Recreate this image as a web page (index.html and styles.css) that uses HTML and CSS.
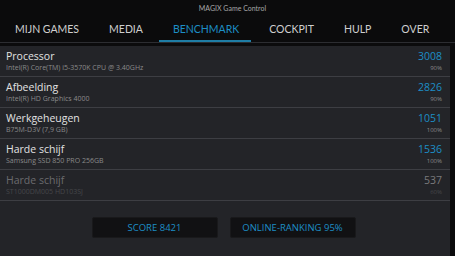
FILE: index.html
```html
<!DOCTYPE html>
<html lang="nl">
<head>
  <meta charset="UTF-8">
  <title>MAGIX Game Control</title>
  <link rel="stylesheet" href="styles.css">
</head>
<body>
  <!-- kop met titel en tabs -->
  <header class="header">
    <div class="appTitle">MAGIX Game Control</div>
    <nav class="tabs">
      <span class="tab">MIJN GAMES</span>
      <span class="tab">MEDIA</span>
      <span class="tab active">BENCHMARK</span>
      <span class="tab">COCKPIT</span>
      <span class="tab">HULP</span>
      <span class="tab">OVER</span>
    </nav>
  </header>

  <!-- benchmark lijst -->
  <main class="panel">
    <div class="row">
      <div class="info">
        <div class="name">Processor</div>
        <div class="detail">Intel(R) Core(TM) i5-3570K CPU @ 3.40GHz</div>
      </div>
      <div class="result">
        <div class="value">3008</div>
        <div class="percent">90%</div>
      </div>
    </div>
    <div class="row">
      <div class="info">
        <div class="name">Afbeelding</div>
        <div class="detail">Intel(R) HD Graphics 4000</div>
      </div>
      <div class="result">
        <div class="value">2826</div>
        <div class="percent">90%</div>
      </div>
    </div>
    <div class="row">
      <div class="info">
        <div class="name">Werkgeheugen</div>
        <div class="detail">B75M-D3V (7,9 GB)</div>
      </div>
      <div class="result">
        <div class="value">1051</div>
        <div class="percent">100%</div>
      </div>
    </div>
    <div class="row">
      <div class="info">
        <div class="name">Harde schijf</div>
        <div class="detail">Samsung SSD 850 PRO 256GB</div>
      </div>
      <div class="result">
        <div class="value">1536</div>
        <div class="percent">100%</div>
      </div>
    </div>
    <div class="row dimmed">
      <div class="info">
        <div class="name">Harde schijf</div>
        <div class="detail">ST1000DM005 HD103SJ</div>
      </div>
      <div class="result">
        <div class="value">537</div>
        <div class="percent">60%</div>
      </div>
    </div>

    <div class="actions">
      <button class="scoreButton">SCORE 8421</button>
      <button class="scoreButton">ONLINE-RANKING 95%</button>
    </div>
  </main>
</body>
</html>
```

FILE: styles.css
```css
/* algemeen */
html, body {
  margin: 0;
  height: 100%;
}

body {
  background: #0b0b0c;
  font-family: "Open Sans", "Noto Sans", sans-serif;
  color: #d8d8d8;
  display: flex;
  flex-direction: column;
  overflow: hidden;
}

/* kop */
.header {
  height: 42px;
  border-bottom: 1px solid #2c2d31;
  display: flex;
  flex-direction: column;
}

.appTitle {
  text-align: center;
  font-family: Lato, "Open Sans", sans-serif;
  font-size: 7px;
  color: #a6a6a6;
  padding-top: 4px;
  padding-left: 10px;
  height: 11px;
}

.tabs {
  display: flex;
  gap: 30px;
  padding-left: 15px;
  flex: 1;
  align-items: stretch;
}

.tab {
  font-family: Lato, "Open Sans", sans-serif;
  font-size: 10.5px;
  color: #cfcfcf;
  padding-top: 8px;
  position: relative;
  white-space: nowrap;
  flex-shrink: 0;
}

.tab.active {
  color: #1d8ec6;
}

/* blauwe lijn onder actieve tab */
.tab.active::after {
  content: "";
  position: absolute;
  left: -14px;
  right: -12px;
  bottom: 0;
  height: 2px;
  background: #1f7ea6;
}

/* paneel */
.panel {
  flex: 1;
  margin-top: 3px;
  margin-right: 5px;
  background: #232428;
  display: flex;
  flex-direction: column;
}

.row {
  height: 30px;
  border-bottom: 1px solid #3d3e43;
  display: flex;
  justify-content: space-between;
  padding: 0 8px 0 6px;
}

.name {
  font-size: 10.5px;
  color: #e2e2e2;
  padding-top: 3px;
  line-height: 14px;
}

.detail {
  font-size: 7px;
  color: #8a8a8a;
  line-height: 10px;
}

.result {
  text-align: right;
}

.value {
  font-size: 10.5px;
  color: #1d8ec6;
  padding-top: 3px;
  line-height: 14px;
}

.percent {
  font-size: 6px;
  color: #8a8a8a;
  line-height: 10px;
}

/* uitgeschakelde rij */
.dimmed .name {
  color: #6b6b6e;
}

.dimmed .detail,
.dimmed .percent {
  color: #46474b;
}

.dimmed .value {
  color: #7a7a7c;
}

/* knoppen onderaan */
.actions {
  display: flex;
  justify-content: center;
  gap: 12px;
  padding-top: 16px;
  padding-right: 3px;
}

.scoreButton {
  width: 126px;
  height: 21px;
  background: #111113;
  border: 1px solid #19191b;
  border-radius: 2px;
  color: #1d8ec6;
  font-family: "Open Sans", "Noto Sans", sans-serif;
  font-size: 9.5px;
  padding: 0;
}
```
